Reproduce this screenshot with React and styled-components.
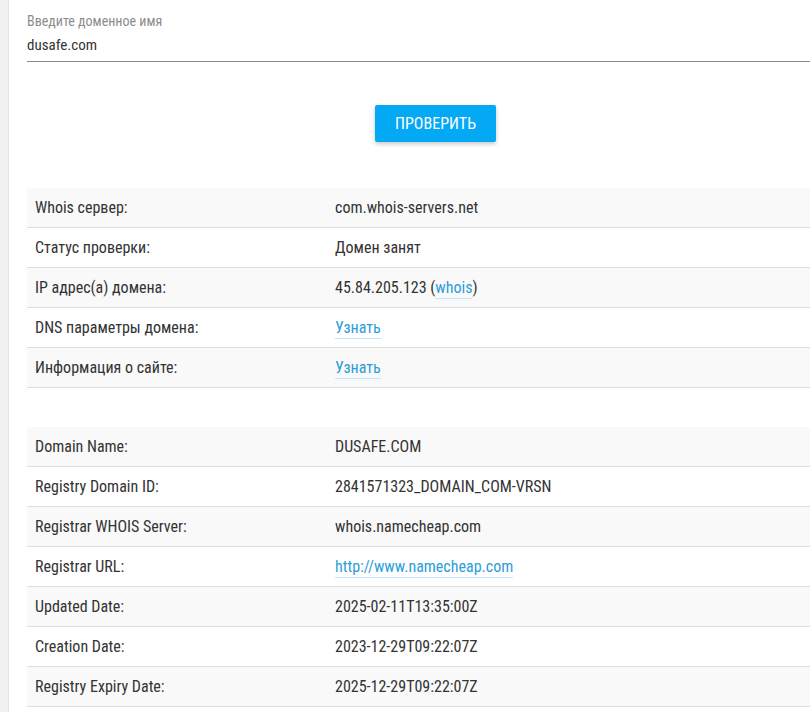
import React from "react";
import styled, { createGlobalStyle } from "styled-components";

const GlobalStyle = createGlobalStyle`
  html, body {
    margin: 0;
    padding: 0;
    background: #f1f1f1;
  }
  body {
    font-family: "Roboto", "Liberation Sans", sans-serif;
    font-stretch: condensed;
    color: #333;
    overflow: hidden;
  }
`;

const Layout = styled.div`
  display: flex;
  height: 712px;
  padding-left: 8px;
`;

const Panel = styled.main`
  flex-shrink: 0;
  width: 817px;
  background: #fff;
  border-left: 1px solid #e4e4e4;
  padding: 12px 0 0 18px;
`;

const Field = styled.div`
  display: flex;
  flex-direction: column;
  border-bottom: 1px solid #8a8a8a;
  padding-bottom: 6px;
`;

const FieldLabel = styled.label`
  font-size: 14px;
  color: #8d8d8d;
  line-height: 18px;
`;

const FieldInput = styled.input`
  border: none;
  outline: none;
  padding: 0;
  margin-top: 5px;
  font: inherit;
  font-size: 15px;
  line-height: 20px;
  color: #333;
  background: transparent;
`;

const Actions = styled.div`
  display: flex;
  justify-content: center;
  padding: 43px 0 46px;
`;

const Button = styled.button`
  background: #03a9f4;
  color: #fff;
  border: none;
  border-radius: 2px;
  width: 121px;
  height: 37px;
  font: inherit;
  font-size: 16px;
  text-transform: uppercase;
  box-shadow: 0 2px 4px rgba(0, 0, 0, 0.22);
  cursor: pointer;
`;

const Table = styled.table`
  width: 100%;
  border-collapse: collapse;
  margin-bottom: ${(p) => p.$gap || 0}px;
  font-size: 16px;
`;

const Row = styled.tr`
  background: ${(p) => (p.$odd ? "#f9f9f9" : "#fff")};
  border-bottom: 1px solid #dedede;
`;

const Cell = styled.td`
  padding: 0 8px;
  height: 39px;
  width: ${(p) => p.$w || "auto"};
  vertical-align: middle;
  white-space: nowrap;
`;

const Link = styled.a`
  color: #2d9ed8;
  text-decoration: none;
  border-bottom: 1px solid #c4e5f5;
  padding-bottom: 1px;
`;

const statusRows = [
  ["Whois сервер:", "com.whois-servers.net"],
  ["Статус проверки:", "Домен занят"],
  [
    "IP адрес(а) домена:",
    <>
      45.84.205.123 (<Link href="#">whois</Link>)
    </>,
  ],
  ["DNS параметры домена:", <Link href="#">Узнать</Link>],
  ["Информация о сайте:", <Link href="#">Узнать</Link>],
];

const whoisRows = [
  ["Domain Name:", "DUSAFE.COM"],
  ["Registry Domain ID:", "2841571323_DOMAIN_COM-VRSN"],
  ["Registrar WHOIS Server:", "whois.namecheap.com"],
  ["Registrar URL:", <Link href="#">http://www.namecheap.com</Link>],
  ["Updated Date:", "2025-02-11T13:35:00Z"],
  ["Creation Date:", "2023-12-29T09:22:07Z"],
  ["Registry Expiry Date:", "2025-12-29T09:22:07Z"],
];

const InfoTable = ({ rows, gap }) => (
  <Table $gap={gap}>
    <tbody>
      {rows.map(([label, value], i) => (
        <Row key={i} $odd={i % 2 === 0}>
          <Cell $w="284px">{label}</Cell>
          <Cell>{value}</Cell>
        </Row>
      ))}
    </tbody>
  </Table>
);

const App = () => (
  <>
    <GlobalStyle />
    <Layout>
      <Panel>
        <Field>
          <FieldLabel>Введите доменное имя</FieldLabel>
          <FieldInput defaultValue="dusafe.com" />
        </Field>
        <Actions>
          <Button>Проверить</Button>
        </Actions>
        <InfoTable rows={statusRows} gap={39} />
        <InfoTable rows={whoisRows} />
      </Panel>
    </Layout>
  </>
);

export default App;
